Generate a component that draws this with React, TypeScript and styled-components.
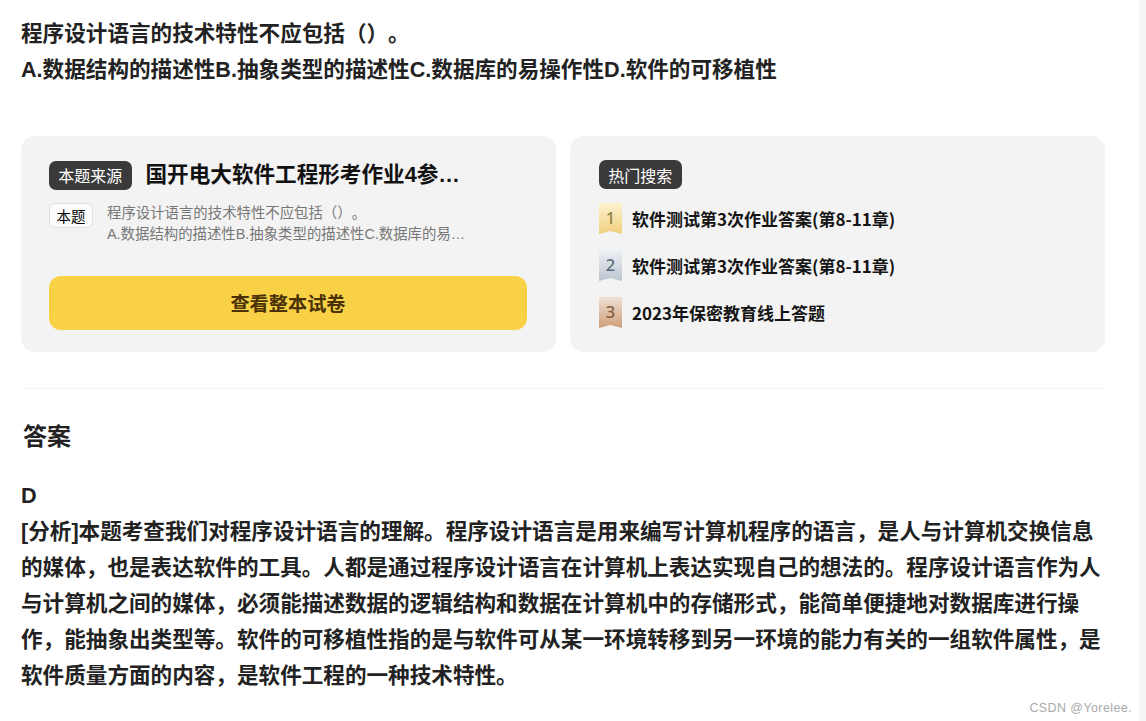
import React from 'react';
import styled, { createGlobalStyle } from 'styled-components';

const GlobalStyle = createGlobalStyle`
  html, body {
    margin: 0;
    padding: 0;
    height: 100%;
    overflow: hidden;
    background: #fff;
  }
  * {
    box-sizing: border-box;
  }
  body {
    font-family: "Liberation Sans", "Noto Sans CJK SC", sans-serif;
    text-spacing-trim: space-all;
  }
`;

const hotList = [
  { rank: 1, title: '软件测试第3次作业答案(第8-11章)' },
  { rank: 2, title: '软件测试第3次作业答案(第8-11章)' },
  { rank: 3, title: '2023年保密教育线上答题' },
];

const App: React.FC = () => {
  return (
    <Page>
      <GlobalStyle />
      <Content>
        <Question>
          程序设计语言的技术特性不应包括（）。
          <br />
          A.数据结构的描述性B.抽象类型的描述性C.数据库的易操作性D.软件的可移植性
        </Question>

        <Cards>
          <Card>
            <SourceRow>
              <DarkTag>本题来源</DarkTag>
              <SourceTitle>国开电大软件工程形考作业4参考答案</SourceTitle>
            </SourceRow>
            <ExcerptRow>
              <LightTag>本题</LightTag>
              <Excerpt>
                <ExcerptLine>程序设计语言的技术特性不应包括（）。</ExcerptLine>
                <ExcerptLine>A.数据结构的描述性B.抽象类型的描述性C.数据库的易操作性D.软件的可移植性</ExcerptLine>
              </Excerpt>
            </ExcerptRow>
            <ViewButton>查看整本试卷</ViewButton>
          </Card>

          <HotCard>
            <SourceRow>
              <DarkTag>热门搜索</DarkTag>
            </SourceRow>
            <HotList>
              {hotList.map((item) => (
                <HotItem key={item.rank}>
                  <Medal $rank={item.rank}>{item.rank}</Medal>
                  <HotTitle>{item.title}</HotTitle>
                </HotItem>
              ))}
            </HotList>
          </HotCard>
        </Cards>

        <Divider />

        <AnswerHeading>答案</AnswerHeading>
        <AnswerBody>
          D
          <br />
          [分析]本题考查我们对程序设计语言的理解。程序设计语言是用来编写计算机程序的语言，是人与计算机交换信息的媒体，也是表达软件的工具。人都是通过程序设计语言在计算机上表达实现自己的想法的。程序设计语言作为人与计算机之间的媒体，必须能描述数据的逻辑结构和数据在计算机中的存储形式，能简单便捷地对数据库进行操作，能抽象出类型等。软件的可移植性指的是与软件可从某一环境转移到另一环境的能力有关的一组软件属性，是软件质量方面的内容，是软件工程的一种技术特性。
        </AnswerBody>
      </Content>
      <ScrollStrip />
      <Watermark>CSDN @Yorelee.</Watermark>
    </Page>
  );
};

const medalColors: Record<number, { from: string; to: string; text: string }> = {
  1: { from: '#fdf3d0', to: '#f0cf7c', text: '#94803f' },
  2: { from: '#eef1f5', to: '#bcc5d0', text: '#5d6b7a' },
  3: { from: '#eedfd4', to: '#cf9f78', text: '#80603f' },
};

const Page = styled.div`
  position: relative;
  display: flex;
  width: 1146px;
  height: 721px;
  overflow: hidden;
  background: #fff;
`;

const Content = styled.main`
  width: 1139px;
  padding: 16px 34px 0 21px;
`;

const ScrollStrip = styled.div`
  width: 7px;
  background: #f4f4f4;
`;

const Question = styled.div`
  font-size: 21.6px;
  line-height: 36px;
  font-weight: 700;
  color: #222;
`;

const Cards = styled.div`
  display: grid;
  grid-template-columns: 535px 535px;
  gap: 14px;
  margin-top: 48px;
`;

const Card = styled.section`
  height: 216px;
  padding: 24px 28px;
  background: #f3f3f3;
  border-radius: 14px;
`;

const HotCard = styled(Card)`
  padding-left: 29px;
`;

const SourceRow = styled.div`
  display: flex;
  align-items: center;
  gap: 14px;
`;

const DarkTag = styled.span`
  flex: none;
  display: flex;
  align-items: center;
  justify-content: center;
  width: 82.5px;
  height: 29px;
  background: #3a3a3a;
  border-radius: 7px;
  color: #fff;
  font-size: 16px;
`;

const SourceTitle = styled.h3`
  margin: 0;
  width: 316px;
  font-size: 21.6px;
  line-height: 30px;
  font-weight: 700;
  color: #111;
  white-space: nowrap;
  overflow: hidden;
  text-overflow: ellipsis;
`;

const ExcerptRow = styled.div`
  display: flex;
  gap: 14px;
  margin-top: 13px;
`;

const LightTag = styled.span`
  flex: none;
  display: flex;
  align-items: center;
  justify-content: center;
  width: 44px;
  height: 25px;
  background: #fbfbfb;
  border: 1px solid #e0e0e0;
  border-radius: 6px;
  color: #000;
  font-size: 14.4px;
`;

const Excerpt = styled.div`
  width: 362px;
`;

const ExcerptLine = styled.div`
  font-size: 14.4px;
  line-height: 21px;
  color: #777;
  white-space: nowrap;
  overflow: hidden;
  text-overflow: ellipsis;
`;

const ViewButton = styled.button`
  display: block;
  width: 478px;
  height: 54px;
  margin-top: 31px;
  padding: 0;
  border: none;
  border-radius: 12px;
  background: #f8d146;
  color: #4a3206;
  font-family: inherit;
  font-size: 19.2px;
  font-weight: 700;
`;

const HotList = styled.div`
  display: flex;
  flex-direction: column;
  gap: 16px;
  margin-top: 14px;
`;

const HotItem = styled.div`
  display: flex;
  align-items: center;
  gap: 10px;
`;

const Medal = styled.span<{ $rank: number }>`
  flex: none;
  display: flex;
  align-items: center;
  justify-content: center;
  width: 23px;
  height: 31px;
  padding-bottom: 3px;
  background: linear-gradient(
    180deg,
    ${({ $rank }) => medalColors[$rank].from},
    ${({ $rank }) => medalColors[$rank].to}
  );
  clip-path: polygon(0 0, 100% 0, 100% 100%, 50% 90%, 0 100%);
  color: ${({ $rank }) => medalColors[$rank].text};
  font-family: "Noto Sans", sans-serif;
  font-size: 16.5px;
  font-weight: 500;
`;

const HotTitle = styled.span`
  font-family: "Noto Sans CJK SC", sans-serif;
  font-size: 17px;
  line-height: 24px;
  font-weight: 700;
  color: #151515;
`;

const Divider = styled.hr`
  height: 1px;
  margin: 36px 0 0;
  border: none;
  background: #f5f5f5;
`;

const AnswerHeading = styled.h2`
  margin: 30px 0 0 2px;
  font-size: 24px;
  line-height: 36px;
  font-weight: 700;
  color: #222;
`;

const AnswerBody = styled.div`
  margin-top: 23px;
  font-size: 21.6px;
  line-height: 36px;
  font-weight: 700;
  color: #222;
`;

const Watermark = styled.span`
  position: absolute;
  right: 14px;
  bottom: 6px;
  font-size: 12.5px;
  letter-spacing: 0.4px;
  color: #aaa;
`;

export default App;
